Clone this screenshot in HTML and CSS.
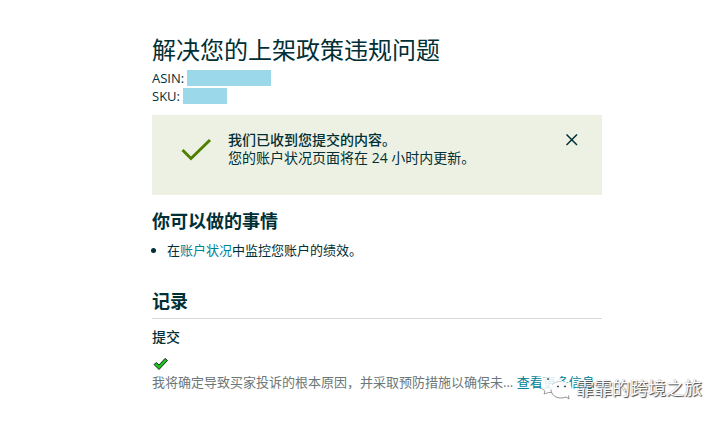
FILE: index.html
```html
<!DOCTYPE html>
<html lang="zh-CN">
<head>
    <meta charset="UTF-8">
    <title>解决您的上架政策违规问题</title>
    <meta name="viewport" content="width=device-width, initial-scale=1.0">
    <link rel="stylesheet" href="styles.css">
</head>
<body>
    <main class="container">
        <h1>解决您的上架政策违规问题</h1>
        <div class="product">
            <div class="product-row">ASIN: <span class="mask mask-asin"></span></div>
            <div class="product-row">SKU: <span class="mask mask-sku"></span></div>
        </div>

        <section class="alert">
            <svg class="alert-icon" width="32" height="26" viewBox="0 0 32 26">
                <path d="M2.500 13 L11 21.500 L30 3" fill="none" stroke="#507f00" stroke-width="3"/>
            </svg>
            <div class="alert-text">
                <strong>我们已收到您提交的内容。</strong>
                <p>您的账户状况页面将在 24 小时内更新。</p>
            </div>
            <button class="close" type="button" aria-label="关闭">
                <svg width="12" height="12" viewBox="0 0 12 12">
                    <path d="M.5 .5 L11 11 M11 .5 L.5 11" fill="none" stroke="#002f36" stroke-width="1.5"/>
                </svg>
            </button>
        </section>

        <h2>你可以做的事情</h2>
        <ul>
            <li>在<a href="#">账户状况</a>中监控您账户的绩效。</li>
        </ul>

        <section class="records">
            <h2>记录</h2>
            <h3>提交</h3>
            <svg class="done" width="18" height="14" viewBox="0 0 18 14">
                <path d="M2 7.500 L4.500 5.500 L7 8 L13 1.500 L15.500 3.500 L7 12.500 Z" fill="#1fc01f" stroke="#17351a" stroke-width="1" stroke-linejoin="round"/>
            </svg>
            <p class="record">我将确定导致买家投诉的根本原因，并采取预防措施以确保未... <a class="more" href="#">查看更多信息</a></p>
        </section>
    </main>

    <div class="watermark">
        <svg width="34" height="28" viewBox="0 0 34 28">
            <path d="M12 1 C5 1 1 5 1 10 C1 13 3 15.500 5 17 L4 21 L8.500 18.500 C14 20 23 17 23 10 C23 5 18 1 12 1 Z" fill="#fff" fill-opacity=".85"/>
            <path d="M1 14 L5 17 L4 20 L8.500 18.500 L12 18.500" fill="none" stroke="#888" stroke-width=".8"/>
            <path d="M21 7 C14 7 11 11 11 15.500 C11 20 15 24 21 24 C23 24 24.500 23.500 26 23 L29 25 L28.500 21.500 C31 20 32 18 32 15.500 C32 11 27 7 21 7 Z" fill="#fff" fill-opacity=".9"/>
            <path d="M11 15.500 C11 20 15 24 21 24 C23 24 24.500 23.500 26 23 L29 25 L28.500 21.500" fill="none" stroke="#777" stroke-width=".8"/>
            <path d="M12 11 C14 8 18 7 22 7.500" fill="none" stroke="#aaa" stroke-width=".6"/>
            <path d="M7 5 h2 M17 12.500 h2 M24 12.500 h2" stroke="#455" stroke-width="1.300"/>
        </svg>
        <span>霏霏的跨境之旅</span>
    </div>
</body>
</html>
```
FILE: styles.css
```css
:root {
    --text-color: #002f36;
    --link-color: #008296;
    --muted-color: #6c7778;
    --mask-color: #9bd9ea;
}

body {
    font-family: "Open Sans", "Noto Sans CJK SC", sans-serif;
    font-size: 13px;
    line-height: 18px;
    margin: 0;
    background-color: #fff;
    color: var(--text-color);
}

.container {
    max-width: 450px;
    margin-left: 152px;
    padding-top: 34px;
}

h1, h2, h3, p, ul {
    margin: 0;
}

h1 {
    font-size: 24px;
    font-weight: 400;
    line-height: 32px;
}

h2 {
    font-size: 18px;
    font-weight: 700;
    line-height: 24px;
}

h3 {
    font-size: 14px;
    font-weight: 500;
    line-height: 20px;
    margin-top: 8px;
}

a {
    color: var(--link-color);
    text-decoration: none;
}

.product {
    margin-top: 3px;
}

.product-row {
    display: flex;
    align-items: center;
    gap: 3px;
    height: 18px;
}

.mask {
    height: 16px;
    background-color: var(--mask-color);
}

.mask-asin {
    width: 84px;
}

.mask-sku {
    width: 44px;
}

.alert {
    display: flex;
    align-items: flex-start;
    min-height: 64px;
    margin: 10px 0 14px;
    padding: 16px 24px 0 28px;
    background-color: #edf1e3;
}

.alert-icon {
    margin-top: 6px;
}

.alert-text {
    flex: 1;
    margin-left: 16px;
    font-size: 14px;
}

.alert-text strong {
    display: block;
    font-weight: 500;
}

.close {
    display: flex;
    padding: 3px 0;
    border: none;
    background: none;
    cursor: pointer;
}

ul {
    margin-top: 8px;
    padding-left: 15px;
}

.records {
    margin-top: 30px;
}

.records h2 {
    padding-bottom: 5px;
    border-bottom: 1px solid #d5dbdb;
}

.done {
    display: block;
    margin-top: 10px;
}

.record {
    color: var(--muted-color);
    font-weight: 400;
    margin-top: 2px;
}

/* account mark over the bottom right corner */
.watermark {
    position: absolute;
    right: 24px;
    bottom: 19px;
    display: flex;
    align-items: center;
    gap: 2px;
    color: #fff;
    font-size: 18px;
    line-height: 28px;
    text-shadow: 1px 1px 1px #444, 0 0 1px #888;
}
```
